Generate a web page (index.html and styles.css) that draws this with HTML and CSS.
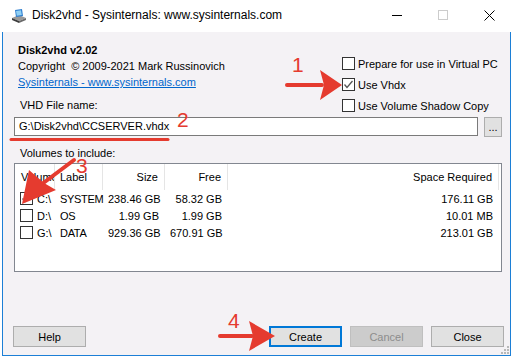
FILE: index.html
```html
<!DOCTYPE html>
<html lang="en">
<head>
    <meta charset="UTF-8">
    <title>Disk2vhd - Sysinternals: www.sysinternals.com</title>
    <link rel="stylesheet" href="styles.css">
</head>
<body>
    <div class="window">
        <div class="titlebar">
            <svg class="app-icon" width="16" height="16" viewBox="0 0 16 16">
                <path d="M1 10 L8 7 L15 10 L8 13 Z" fill="#9a9a9a"/>
                <path d="M1 10 L8 13 L8 15 L1 12 Z" fill="#3c3c3c"/>
                <path d="M8 13 L15 10 L15 12 L8 15 Z" fill="#6a6a6a"/>
                <path d="M4 2 L11 1 L12 8 L5 9 Z" fill="#2f7fd0"/>
                <path d="M5 3 L10 2.3 L10.8 7 L5.8 7.7 Z" fill="#8fd0f5"/>
            </svg>
            <span class="title">Disk2vhd - Sysinternals: www.sysinternals.com</span>
            <div class="controls">
                <span class="ctl">
                    <svg width="10" height="10" viewBox="0 0 10 10"><line x1="0" y1="5.5" x2="10" y2="5.5" stroke="#000" stroke-width="1"/></svg>
                </span>
                <span class="ctl">
                    <svg width="10" height="10" viewBox="0 0 10 10"><rect x="0.5" y="0.5" width="9" height="9" fill="none" stroke="#cccccc" stroke-width="1"/></svg>
                </span>
                <span class="ctl">
                    <svg width="11" height="11" viewBox="0 0 11 11"><path d="M0.5 0.5 L10.5 10.5 M10.5 0.5 L0.5 10.5" stroke="#000" stroke-width="1"/></svg>
                </span>
            </div>
        </div>

        <div class="client">
            <div class="top">
                <div class="left">
                    <div class="about">
                        <div class="name">Disk2vhd v2.02</div>
                        <div>Copyright&nbsp; © 2009-2021 Mark Russinovich</div>
                        <a class="link" href="#">Sysinternals - www.sysinternals.com</a>
                    </div>
                    <div class="field-label">VHD File name:</div>
                </div>
                <div class="options">
                    <label class="check"><span class="box"></span>Prepare for use in Virtual PC</label>
                    <label class="check"><span class="box checked"><svg width="11" height="11" viewBox="0 0 11 11"><polyline points="1.5,5.5 4,8.5 9.5,2" fill="none" stroke="#555" stroke-width="1.3"/></svg></span>Use Vhdx</label>
                    <label class="check"><span class="box"></span>Use Volume Shadow Copy</label>
                </div>
            </div>

            <div class="file-row">
                <div class="input">G:\Disk2vhd\CCSERVER.vhdx</div>
                <button class="browse">...</button>
            </div>

            <div class="field-label volumes-label">Volumes to include:</div>

            <div class="listbox">
                <div class="list-head">
                    <div class="col vol">Volume</div>
                    <div class="col">Label</div>
                    <div class="col num">Size</div>
                    <div class="col num">Free</div>
                    <div class="col num">Space Required</div>
                </div>
                <div class="list-row">
                    <div class="col vol"><span class="box checked"><svg width="11" height="11" viewBox="0 0 11 11"><polyline points="1.5,5.5 4,8.5 9.5,2" fill="none" stroke="#555" stroke-width="1.3"/></svg></span>C:\</div>
                    <div class="col label">SYSTEM</div>
                    <div class="col num">238.46 GB</div>
                    <div class="col num">58.32 GB</div>
                    <div class="col num">176.11 GB</div>
                </div>
                <div class="list-row">
                    <div class="col vol"><span class="box"></span>D:\</div>
                    <div class="col label">OS</div>
                    <div class="col num">1.99 GB</div>
                    <div class="col num">1.99 GB</div>
                    <div class="col num">10.01 MB</div>
                </div>
                <div class="list-row">
                    <div class="col vol"><span class="box"></span>G:\</div>
                    <div class="col label">DATA</div>
                    <div class="col num">929.36 GB</div>
                    <div class="col num">670.91 GB</div>
                    <div class="col num">213.01 GB</div>
                </div>
            </div>

            <div class="buttons">
                <button class="btn">Help</button>
                <div class="btn-group">
                    <button class="btn default">Create</button>
                    <button class="btn" disabled>Cancel</button>
                    <button class="btn">Close</button>
                </div>
            </div>

            <svg class="grip" width="8" height="8" viewBox="0 0 8 8">
                <rect x="6" y="0" width="2" height="2" fill="#b8b8b8"/>
                <rect x="3" y="3" width="2" height="2" fill="#b8b8b8"/>
                <rect x="6" y="3" width="2" height="2" fill="#b8b8b8"/>
                <rect x="0" y="6" width="2" height="2" fill="#b8b8b8"/>
                <rect x="3" y="6" width="2" height="2" fill="#b8b8b8"/>
                <rect x="6" y="6" width="2" height="2" fill="#b8b8b8"/>
            </svg>
        </div>
    </div>

    <!-- red callouts drawn over the screenshot -->
    <svg class="annotations" width="514" height="359" viewBox="0 0 514 359">
        <g fill="#e53b2f" stroke="none">
            <text x="292" y="72" class="callout">1</text>
            <text x="177" y="127" class="callout">2</text>
            <text x="76" y="173" class="callout">3</text>
            <text x="228" y="328" class="callout">4</text>
            <polygon points="320,70 342,85 320,100 324,85"/>
            <polygon points="29,170 22,204 56,190 44,183"/>
            <polygon points="249,321 275,336 249,351 253,336"/>
        </g>
        <g stroke="#e53b2f" stroke-width="4" stroke-linecap="round">
            <line x1="287" y1="85" x2="322" y2="85"/>
            <line x1="74" y1="160" x2="42" y2="184"/>
            <line x1="220" y1="336" x2="252" y2="336"/>
            <line x1="11" y1="139.5" x2="168" y2="139.5" stroke-width="3"/>
        </g>
    </svg>
</body>
</html>
```

FILE: styles.css
```css
body {
    margin: 0;
    background-color: #fff;
    font-family: 'Liberation Sans', Arial, sans-serif;
    font-size: 11px;
    color: #000;
    position: relative;
    width: 514px;
    height: 359px;
    overflow: hidden;
}
.window {
    margin-left: 2px;
    width: 509px;
}
.titlebar {
    height: 32px;
    display: flex;
    align-items: center;
    padding-left: 9px;
    background-color: #fff;
}
.app-icon {
    margin-right: 5px;
    margin-top: -1px;
}
.title {
    font-size: 12px;
    margin-top: -2px;
    flex: 1;
}
.controls {
    display: flex;
    height: 32px;
    margin-right: -1px;
}
.ctl {
    width: 46px;
    display: flex;
    align-items: center;
    justify-content: center;
    margin-top: -2px;
}
.client {
    position: relative;
    box-sizing: border-box;
    width: 509px;
    height: 324px;
    background-color: #f4f2f5;
    border: 1px solid #1c7fd6;
    border-top: none;
    padding: 10px 8px 8px 11px;
    display: flex;
    flex-direction: column;
}
.top {
    display: grid;
    grid-template-columns: 328px 1fr;
    height: 75px;
}
.about {
    margin-left: 4px;
    line-height: 16px;
}
.name {
    font-weight: bold;
}
.link {
    color: #0066cc;
    text-decoration: underline;
}
.field-label {
    margin-left: 6px;
    margin-top: 7px;
    line-height: 16px;
}
.options {
    padding-top: 11px;
}
.check {
    display: flex;
    align-items: center;
    height: 21px;
}
.box {
    width: 13px;
    height: 13px;
    box-sizing: border-box;
    border: 1px solid #333;
    background-color: #fff;
    display: inline-flex;
    align-items: center;
    justify-content: center;
    flex-shrink: 0;
}
.check .box {
    margin-right: 3px;
}
.file-row {
    display: flex;
    gap: 6px;
    height: 19px;
}
.input {
    width: 464px;
    box-sizing: border-box;
    border: 1px solid #7a7a7a;
    background-color: #fff;
    padding-left: 4px;
    line-height: 17px;
}
.browse {
    width: 18px;
    height: 20px;
    box-sizing: border-box;
    border: 1px solid #adadad;
    background-color: #e1e1e1;
    font-family: inherit;
    font-size: 11px;
    padding: 0;
    line-height: 12px;
}
.volumes-label {
    margin-top: 9px;
}
.listbox {
    margin-top: 2px;
    height: 109px;
    box-sizing: border-box;
    border: 1px solid #828790;
    background-color: #fff;
}
.list-head,
.list-row {
    display: grid;
    grid-template-columns: 40px 48px 62px 63px 271px;
}
.list-head {
    height: 26px;
    align-items: stretch;
}
.list-head .col {
    border-right: 1px solid #e5e5e5;
    display: flex;
    align-items: center;
    padding-bottom: 1px;
}
.list-row {
    height: 17px;
    align-items: center;
}
.col {
    padding: 0 5px;
    white-space: nowrap;
    overflow: hidden;
    box-sizing: border-box;
}
.col.label {
    overflow: visible;
    letter-spacing: -0.3px;
}
.col.num {
    text-align: right;
    justify-content: flex-end;
    padding-right: 6px;
}
.list-head .col.vol {
    padding-left: 6px;
}
.list-row .col.vol {
    display: flex;
    align-items: center;
    gap: 4px;
    overflow: visible;
}
.buttons {
    margin-top: auto;
    margin-left: -1px;
    margin-right: -2px;
    display: flex;
    justify-content: space-between;
}
.btn-group {
    display: flex;
    gap: 8px;
}
.btn {
    width: 73px;
    height: 21px;
    box-sizing: border-box;
    border: 1px solid #adadad;
    background-color: #e1e1e1;
    font-family: inherit;
    font-size: 11px;
    color: #000;
    padding: 0;
}
.btn.default {
    border: 2px solid #0078d7;
}
.btn:disabled {
    background-color: #cccccc;
    border-color: #bfbfbf;
    color: #8d8d8d;
}
.grip {
    position: absolute;
    right: 1px;
    bottom: 1px;
}
.annotations {
    position: absolute;
    left: 0;
    top: 0;
    pointer-events: none;
}
.callout {
    font-family: 'Liberation Sans', Arial, sans-serif;
    font-size: 21px;
}
```
